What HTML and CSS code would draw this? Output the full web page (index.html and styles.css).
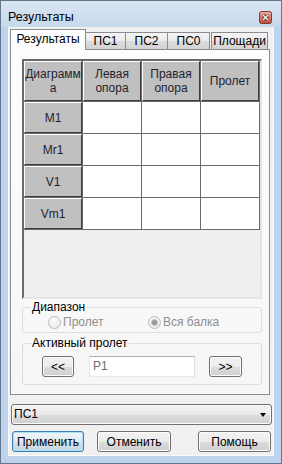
FILE: index.html
```html
<!DOCTYPE html>
<html lang="ru">
<head>
    <meta charset="UTF-8">
    <meta name="viewport" content="width=device-width, initial-scale=1.0">
    <title>Результаты</title>
    <link rel="stylesheet" href="styles.css">
</head>
<body>
    <div class="window">
        <div class="titlebar">
            <span class="title">Результаты</span>
            <span class="close-btn">
                <svg width="13" height="13" viewBox="0 0 13 13">
                    <defs>
                        <linearGradient id="closeGrad" x1="0" y1="0" x2="0" y2="1">
                            <stop offset="0" stop-color="#eab0a6"/>
                            <stop offset="0.5" stop-color="#d6796c"/>
                            <stop offset="1" stop-color="#c2483b"/>
                        </linearGradient>
                    </defs>
                    <rect x="0.5" y="0.5" width="12" height="12" rx="2" fill="url(#closeGrad)" stroke="#7d3b33"/>
                    <path d="M4 4 L9 9 M9 4 L4 9" stroke="#5a2520" stroke-width="3"/>
                    <path d="M4 4 L9 9 M9 4 L4 9" stroke="#f4f4f4" stroke-width="1.5"/>
                </svg>
            </span>
        </div>
        <div class="client">
            <div class="tabs">
                <div class="tab active">Результаты</div>
                <div class="tab">ПС1</div>
                <div class="tab">ПС2</div>
                <div class="tab">ПС0</div>
                <div class="tab">Площади</div>
            </div>
            <div class="tab-page">
                <div class="grid-box">
                    <div class="grid">
                        <div class="hcell">Диаграмм<br>а</div>
                        <div class="hcell">Левая<br>опора</div>
                        <div class="hcell">Правая<br>опора</div>
                        <div class="hcell">Пролет</div>

                        <div class="hcell">M1</div>
                        <div class="cell"></div>
                        <div class="cell"></div>
                        <div class="cell"></div>

                        <div class="hcell">Mr1</div>
                        <div class="cell"></div>
                        <div class="cell"></div>
                        <div class="cell"></div>

                        <div class="hcell">V1</div>
                        <div class="cell"></div>
                        <div class="cell"></div>
                        <div class="cell"></div>

                        <div class="hcell">Vm1</div>
                        <div class="cell"></div>
                        <div class="cell"></div>
                        <div class="cell"></div>
                    </div>
                </div>

                <fieldset class="group range-group">
                    <legend>Диапазон</legend>
                    <div class="radio-row">
                        <label class="radio"><span class="dot"></span>Пролет</label>
                        <label class="radio"><span class="dot checked"></span>Вся балка</label>
                    </div>
                </fieldset>

                <fieldset class="group span-group">
                    <legend>Активный пролет</legend>
                    <div class="span-row">
                        <button class="btn btn-prev">&lt;&lt;</button>
                        <div class="textbox">P1</div>
                        <button class="btn btn-next">&gt;&gt;</button>
                    </div>
                </fieldset>
            </div>

            <div class="combo">
                <span>ПС1</span>
                <span class="arrow"></span>
            </div>

            <div class="buttons">
                <button class="btn btn-apply">Применить</button>
                <button class="btn btn-cancel">Отменить</button>
                <button class="btn btn-help">Помощь</button>
            </div>
        </div>
    </div>
</body>
</html>
```

FILE: styles.css
```css
body {
    margin: 0;
    font-family: "Liberation Sans", Arial, sans-serif;
    font-size: 12px;
    color: #000;
}

.window {
    width: 282px;
    height: 464px;
    box-sizing: border-box;
    border: 1px solid #66778c;
    padding: 0 7px 7px 7px;
    background-color: #bcd3eb;
}

.titlebar {
    height: 26px;
    box-sizing: border-box;
    margin: 0 -7px;
    padding: 9px 9px 0 7px;
    display: flex;
    justify-content: space-between;
    align-items: flex-start;
    background: linear-gradient(#d9e5f2, #c6d8ec);
}

.title {
    font-size: 12.5px;
    line-height: 14px;
}

.close-btn {
    margin-top: 1px;
    width: 13px;
    height: 13px;
}

.close-btn svg {
    display: block;
}

.client {
    height: 429px;
    box-sizing: border-box;
    background-color: #f0f0f0;
    border: 1px solid #fbfbfb;
    border-top-color: #f0f0f0;
    padding-top: 1px;
}

/* tabs */
.tabs {
    display: flex;
    align-items: flex-end;
    height: 20px;
    margin-left: 1px;
}

.tab {
    height: 17px;
    box-sizing: border-box;
    border: 1px solid #898c95;
    border-bottom: none;
    border-left: none;
    background: linear-gradient(#f4f4f4, #eaeaea 50%, #dddddd 51%, #d3d3d3);
    line-height: 16px;
    text-align: center;
}

.tab:nth-child(2) { width: 40px; }
.tab:nth-child(3) { width: 42px; }
.tab:nth-child(4) { width: 42px; }
.tab:nth-child(5) { width: 57px; margin-left: 1px; border-left: 1px solid #898c95; }

.tab.active {
    width: 76px;
    height: 21px;
    margin-bottom: -1px;
    border-left: 1px solid #898c95;
    background: #fdfdfd;
    line-height: 19px;
    position: relative;
    z-index: 1;
}

.tab-page {
    width: 260px;
    height: 346px;
    box-sizing: border-box;
    margin-left: 1px;
    border: 1px solid #898c95;
    background: linear-gradient(#fdfdfd, #f6f6f6);
    padding: 9px 0 0 11px;
}

/* data grid */
.grid-box {
    width: 240px;
    height: 240px;
    box-sizing: border-box;
    border: 2px solid;
    border-color: #6a6a6a #e4e4e4 #e4e4e4 #6a6a6a;
    background-color: #eef0ef;
}

.grid {
    display: grid;
    grid-template-columns: 58px 58px 58px 58px;
    grid-template-rows: 40px 31px 31px 31px 31px;
    gap: 1px;
    width: 236px;
    box-sizing: border-box;
    background-color: #6b6b6b;
    border-right: 1px solid #6b6b6b;
    border-bottom: 1px solid #6b6b6b;
}

.hcell {
    box-sizing: border-box;
    background-color: #c0c0c0;
    border-top: 1px solid #fff;
    border-left: 1px solid #fff;
    border-right: 1px solid #3c3c3c;
    border-bottom: 1px solid #3c3c3c;
    display: flex;
    align-items: center;
    justify-content: center;
    text-align: center;
    font-size: 12px;
    line-height: 14px;
    color: #1f1f2e;
    white-space: nowrap;
}

.cell {
    background-color: #fff;
}

/* group boxes */
.group {
    width: 240px;
    box-sizing: border-box;
    margin: 0;
    border: 1px solid #d5dfe5;
    border-radius: 3px;
    min-width: 0;
}

.group legend {
    margin-left: 8px;
    padding: 0 1px;
    line-height: 14px;
}

.range-group {
    margin-top: 1px;
    padding: 0 0 3px 0;
}

.radio-row {
    display: grid;
    grid-template-columns: 100px auto;
    margin-top: 1px;
    padding-left: 25px;
    height: 14px;
}

.radio {
    display: flex;
    align-items: center;
    color: #8f8f8f;
    line-height: 14px;
}

.dot {
    width: 13px;
    height: 13px;
    box-sizing: border-box;
    border: 1px solid #bcbcbc;
    border-radius: 50%;
    background: radial-gradient(circle at 40% 35%, #fbfbfb, #e6e6e6);
    margin-right: 2px;
    display: flex;
    align-items: center;
    justify-content: center;
}

.dot.checked::after {
    content: "";
    width: 5px;
    height: 5px;
    border-radius: 50%;
    background: #9a9a9a;
    box-shadow: 0 0 0 1px #c8c8c8;
}

.span-group {
    margin-top: 3px;
    padding: 0 0 7px 0;
}

.span-row {
    display: flex;
    margin-top: 6px;
    padding-left: 19px;
    height: 21px;
}

.btn {
    height: 21px;
    box-sizing: border-box;
    border: 1px solid #707070;
    border-radius: 3px;
    background: linear-gradient(#f2f2f2, #ebebeb 50%, #dddddd 51%, #cfcfcf);
    font-family: "Liberation Sans", Arial, sans-serif;
    font-size: 12px;
    color: #000;
    padding: 0;
    box-shadow: inset 0 0 0 1px #fcfcfc;
}

.btn-prev { width: 32px; }
.btn-next { width: 33px; }

.textbox {
    width: 106px;
    height: 21px;
    box-sizing: border-box;
    margin: 0 14px 0 15px;
    border: 1px solid #abadb3;
    border-color: #abadb3 #dbdfe6 #e3e9ef #e2e3ea;
    background: #fff;
    color: #6d6d6d;
    padding-left: 3px;
    line-height: 19px;
}

/* bottom controls */
.combo {
    width: 261px;
    height: 21px;
    box-sizing: border-box;
    margin: 9px 0 0 2px;
    border: 1px solid #707070;
    border-radius: 3px;
    background: linear-gradient(#f2f2f2, #ebebeb 50%, #dddddd 51%, #cfcfcf);
    box-shadow: inset 0 0 0 1px #fcfcfc;
    display: flex;
    align-items: center;
    justify-content: space-between;
    padding: 0 5px 0 2px;
    line-height: 19px;
}

.arrow {
    width: 0;
    height: 0;
    border-left: 3.5px solid transparent;
    border-right: 3.5px solid transparent;
    border-top: 4px solid #000;
}

.buttons {
    display: flex;
    margin-top: 6px;
    padding: 0 2px 0 3px;
}

.btn-apply {
    width: 72px;
    border-color: #3c7fb1;
    background: linear-gradient(#eef4f9, #e2ebf2 50%, #d3e1ec 51%, #c6d7e5);
    box-shadow: inset 0 0 0 1px #a9e1f7;
}

.btn-cancel {
    width: 74px;
    margin-left: 13px;
}

.btn-help {
    width: 73px;
    margin-left: auto;
}
```
